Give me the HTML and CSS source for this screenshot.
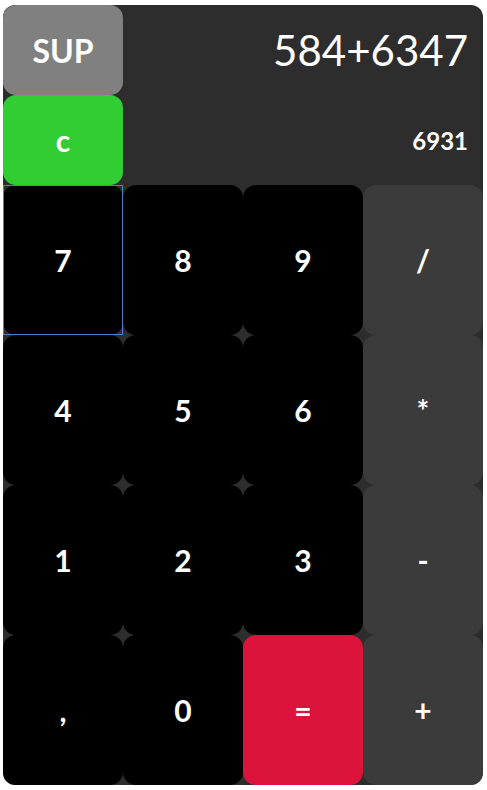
FILE: index.html
```html
<!DOCTYPE html>
<html>
<head>
<meta charset="utf-8">
<link rel="stylesheet" href="styles.css">
</head>
<body>
<div class="page">
  <div class="calc">
    <button class="key key-sup">SUP</button>
    <div class="display">
      <div class="expr">584+6347</div>
      <div class="result">6931</div>
    </div>
    <button class="key key-clear">c</button>
    <button class="key key-num key-focus">7</button>
    <button class="key key-num">8</button>
    <button class="key key-num">9</button>
    <button class="key key-op">/</button>
    <button class="key key-num">4</button>
    <button class="key key-num">5</button>
    <button class="key key-num">6</button>
    <button class="key key-op">*</button>
    <button class="key key-num">1</button>
    <button class="key key-num">2</button>
    <button class="key key-num">3</button>
    <button class="key key-op">-</button>
    <button class="key key-num">,</button>
    <button class="key key-num">0</button>
    <button class="key key-eq">=</button>
    <button class="key key-op">+</button>
  </div>
</div>
</body>
</html>
```

FILE: styles.css
```css
html, body {
  margin: 0;
  padding: 0;
  background: #ffffff;
}

.page {
  padding: 5px 4px 5px 3px;
}

.calc {
  width: 480px;
  height: 780px;
  display: grid;
  grid-template-columns: repeat(4, 120px);
  grid-template-rows: 90px 90px 150px 150px 150px 150px;
  background: #2d2d2d;
  border-radius: 12px;
  overflow: hidden;
  font-family: Lato, "Liberation Sans", sans-serif;
}

.key {
  border: none;
  margin: 0;
  padding: 0;
  border-radius: 13px;
  font-family: Lato, "Liberation Sans", sans-serif;
  font-weight: 700;
  font-size: 30px;
  color: #ffffff;
  display: flex;
  align-items: center;
  justify-content: center;
  cursor: pointer;
  outline: none;
}

.key-sup {
  grid-column: 1;
  grid-row: 1;
  background: #808080;
  font-size: 32px;
}

.key-clear {
  grid-column: 1;
  grid-row: 2;
  background: #32cd32;
}

.display {
  grid-column: 2 / 5;
  grid-row: 1 / 3;
  display: grid;
  grid-template-rows: 90px 90px;
  color: #ffffff;
  padding-right: 15px;
}

.expr {
  display: flex;
  align-items: center;
  justify-content: flex-end;
  font-size: 42px;
  font-weight: 400;
}

.result {
  display: flex;
  align-items: center;
  justify-content: flex-end;
  font-size: 24px;
  font-weight: 700;
}

.key-num {
  background: #000000;
}

.key-op {
  background: #3b3b3b;
}

.key-eq {
  background: #dc143c;
}

.key-focus {
  position: relative;
}

.key-focus::after {
  content: "";
  position: absolute;
  inset: 0;
  border: 1px solid #4f7ed0;
  pointer-events: none;
}
```
